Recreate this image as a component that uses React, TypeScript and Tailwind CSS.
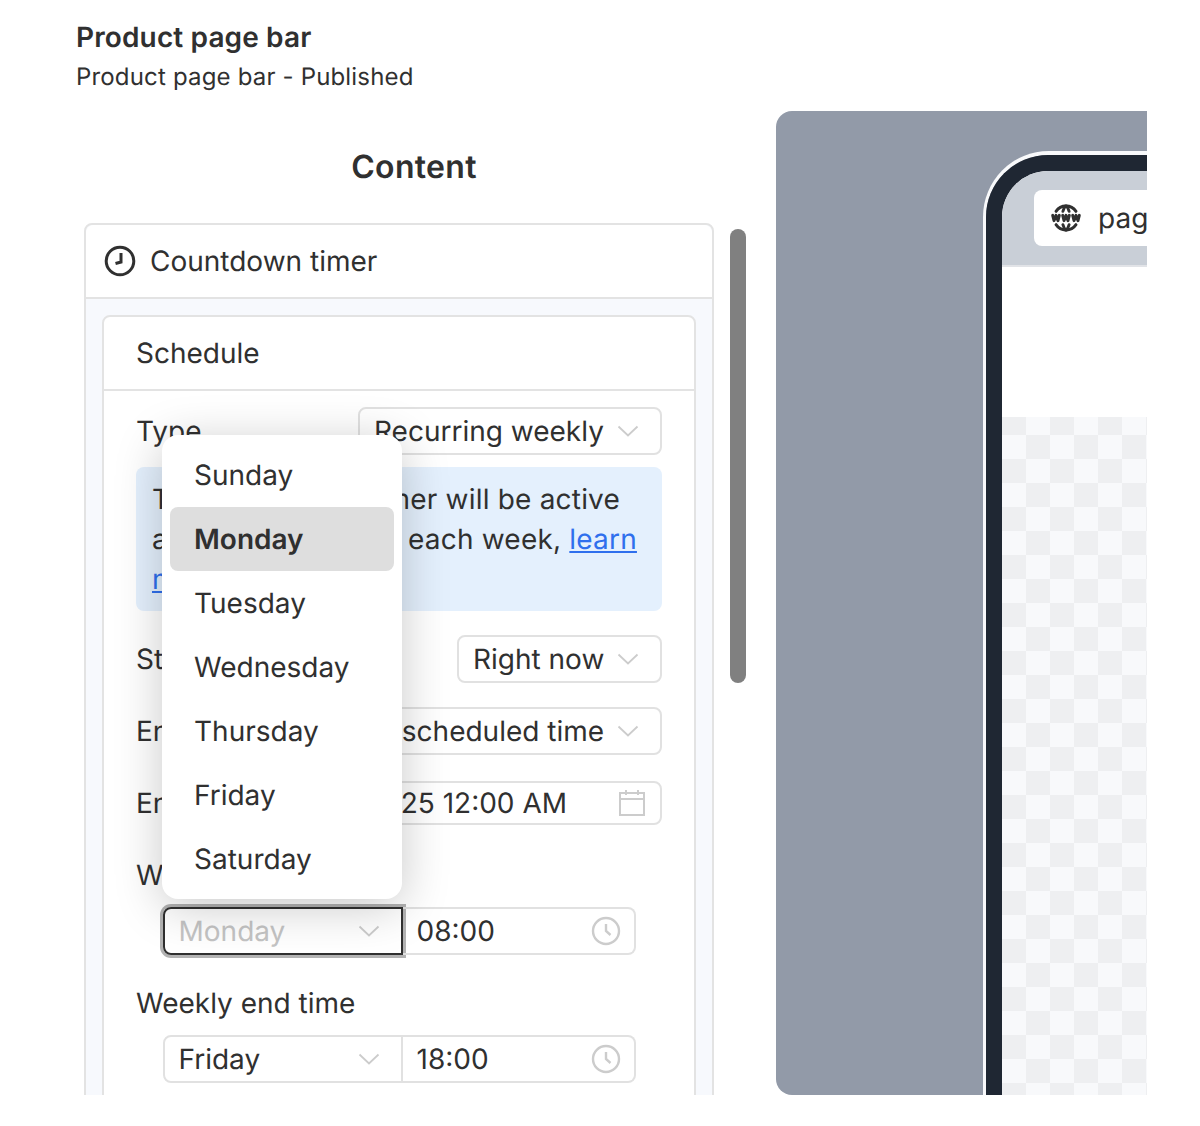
import React from "react";
import { TbWorldWww } from "react-icons/tb";

const Chevron = () => (
  <svg width="22" height="12" viewBox="0 0 22 12" fill="none" className="flex-none">
    <path d="M1.5 1.5 L11 10.5 L20.5 1.5" stroke="#cccccc" strokeWidth="1.8" />
  </svg>
);

const GrayClock = () => (
  <svg width="30" height="30" viewBox="0 0 30 30" fill="none" className="flex-none">
    <circle cx="15" cy="15" r="13" stroke="#cccccc" strokeWidth="2.4" />
    <path d="M15 8 V15 L19.5 19" stroke="#cccccc" strokeWidth="2.4" />
  </svg>
);

const Calendar = () => (
  <svg width="26" height="26" viewBox="0 0 26 26" fill="none" className="flex-none">
    <rect x="1" y="3" width="24" height="22" stroke="#cccccc" strokeWidth="2" />
    <path d="M1 9 H25 M7 0 V5 M19 0 V5" stroke="#cccccc" strokeWidth="2" />
  </svg>
);

function Select({ value, className }: { value: string; className: string }) {
  return (
    <div className={`flex h-12 items-center justify-between rounded-lg border-2 border-[#e1e1e1] pl-[14px] pr-[21px] ${className}`}>
      <span className="whitespace-nowrap">{value}</span>
      <Chevron />
    </div>
  );
}

function Row({ label, children }: { label: string; children: React.ReactNode }) {
  return (
    <div className="flex items-center justify-between">
      <span className="whitespace-nowrap">{label}</span>
      {children}
    </div>
  );
}

function TimeRow({ day, time, focused }: { day: string; time: string; focused?: boolean }) {
  return (
    <div className="ml-[27px] mt-3 flex h-12 w-[473px]">
      {focused ? (
        <div className="flex h-12 w-[240px] flex-none items-center justify-between rounded-l-lg border-2 border-[#303030] pl-[14px] pr-[21px] text-[#c4c4c4] shadow-[0_0_0_3px_#b3b3b3]">
          <span className="-ml-[0.5px]">{day}</span>
          <Chevron />
        </div>
      ) : (
        <div className="flex h-12 w-[240px] flex-none items-center justify-between rounded-l-lg border-2 border-[#e1e1e1] pl-[14px] pr-[21px]">
          <span className="-ml-[0.5px]">{day}</span>
          <Chevron />
        </div>
      )}
      <div className="flex h-12 flex-1 items-center justify-between rounded-r-lg border-2 border-l-0 border-[#e1e1e1] pl-[14px] pr-[13px]">
        <span className="-ml-[0.5px]">{time}</span>
        <GrayClock />
      </div>
    </div>
  );
}

const days = ["Sunday", "Monday", "Tuesday", "Wednesday", "Thursday", "Friday", "Saturday"];

export default function App() {
  return (
    <div
      className="relative h-[1126px] w-[1200px] overflow-hidden bg-white text-[28px] leading-10 text-[#303030] antialiased [text-rendering:geometricPrecision]"
      style={{ fontFamily: "Inter, sans-serif" }}
    >
      <header className="h-[111px] pl-[76px] pt-[16px]">
        <h1 className="text-[28px] font-semibold leading-[42px] tracking-[0.13px]">Product page bar</h1>
        <p className="mt-px text-[24px] leading-9 tracking-[0.17px]">Product page bar - Published</p>
      </header>

      <main className="ml-[84px] flex h-[984px] overflow-hidden">
        <section className="w-[662px] flex-none">
          <h2 className="flex h-[112px] items-center justify-center pr-0.5 text-[32px] font-semibold tracking-[0.3px]">Content</h2>
          <div className="flex">
            <div className="w-[630px] flex-none rounded-t-lg border-2 border-[#e3e3e3] bg-[#f7f9fd]">
              <div className="flex h-[74px] items-center gap-[14px] rounded-t-lg border-b-2 border-[#e3e3e3] bg-white pl-[18px]">
                <svg width="32" height="32" viewBox="0 0 32 32" fill="none">
                  <circle cx="16" cy="16" r="13.8" stroke="#303030" strokeWidth="3" />
                  <path d="M17 8 V17 L11.5 18.5" stroke="#303030" strokeWidth="3" />
                </svg>
                <span>Countdown timer</span>
              </div>
              <div className="px-4 pt-4">
                <div className="rounded-t-lg border-2 border-[#e3e3e3] bg-white">
                  <div className="flex h-[74px] items-center border-b-2 border-[#e3e3e3] pl-8">Schedule</div>
                  <div className="px-8 pb-8 pt-4">
                    <Row label="Type">
                      <Select value="Recurring weekly" className="w-[304px]" />
                    </Row>
                    <div className="mt-3 h-36 rounded-lg bg-[#e4f0fd] px-4 py-3 tracking-[0.2px]">
                      The countdown timer will be active
                      <br />
                      at the chosen time each week,{" "}
                      <a className="text-[#2f6fed] underline">learn more</a>
                    </div>
                    <div className="mt-6">
                      <Row label="Start">
                        <Select value="Right now" className="w-[205px]" />
                      </Row>
                    </div>
                    <div className="mt-6">
                      <Row label="End">
                        <Select value="At scheduled time" className="w-[312px]" />
                      </Row>
                    </div>
                    <div className="mt-[26px]">
                      <Row label="End date">
                        <div className="flex h-11 w-[356px] items-center justify-between rounded-lg border-2 border-[#e1e1e1] pl-[15px] pr-[15px]">
                          <span className="whitespace-nowrap">1/1/2025 12:00 AM</span>
                          <Calendar />
                        </div>
                      </Row>
                    </div>
                    <p className="mt-[30px]">Weekly start time</p>
                    <TimeRow day="Monday" time="08:00" focused />
                    <p className="mt-7">Weekly end time</p>
                    <TimeRow day="Friday" time="18:00" />
                  </div>
                </div>
              </div>
            </div>
            <div className="ml-4 mt-1.5 h-[454px] w-4 flex-none rounded-full bg-[#808080]" />
          </div>
        </section>

        <section className="ml-[30px] w-[371px] flex-none overflow-hidden rounded-l-2xl bg-[#929aa8] pl-[207px] pt-10">
          <div className="h-[1000px] w-[600px] rounded-tl-[66px] border-l-[3px] border-t-4 border-[#f8f9fb]">
            <div className="h-full overflow-hidden rounded-tl-[62px] border-l-[16px] border-t-[16px] border-[#1f2733] bg-white">
              <div className="flex h-[96px] items-start border-b-2 border-[#e1e3e7] bg-[#c9cfd7] pl-8 pt-[19px]">
                <div className="flex h-14 w-[400px] items-center gap-4 rounded-lg bg-white pl-4">
                  <TbWorldWww size={32} color="#303030" strokeWidth={2.2} />
                  <span>page</span>
                </div>
              </div>
              <div className="h-[150px]" />
              <div className="h-[800px] bg-[conic-gradient(#f8f9fb_25%,#eeeff1_0_50%,#f8f9fb_0_75%,#eeeff1_0)] bg-[length:48px_48px] bg-[position:0_-6px]" />
            </div>
          </div>
        </section>
      </main>

      <div className="absolute left-[162px] top-[435px] w-[240px] rounded-2xl bg-white p-2 shadow-[0_8px_48px_rgba(0,0,0,0.22)]">
        {days.map((d) => (
          <div
            key={d}
            className={`flex h-16 items-center rounded-lg pl-6 ${d === "Monday" ? "bg-[#dedede] font-semibold" : ""}`}
          >
            {d}
          </div>
        ))}
      </div>
    </div>
  );
}
